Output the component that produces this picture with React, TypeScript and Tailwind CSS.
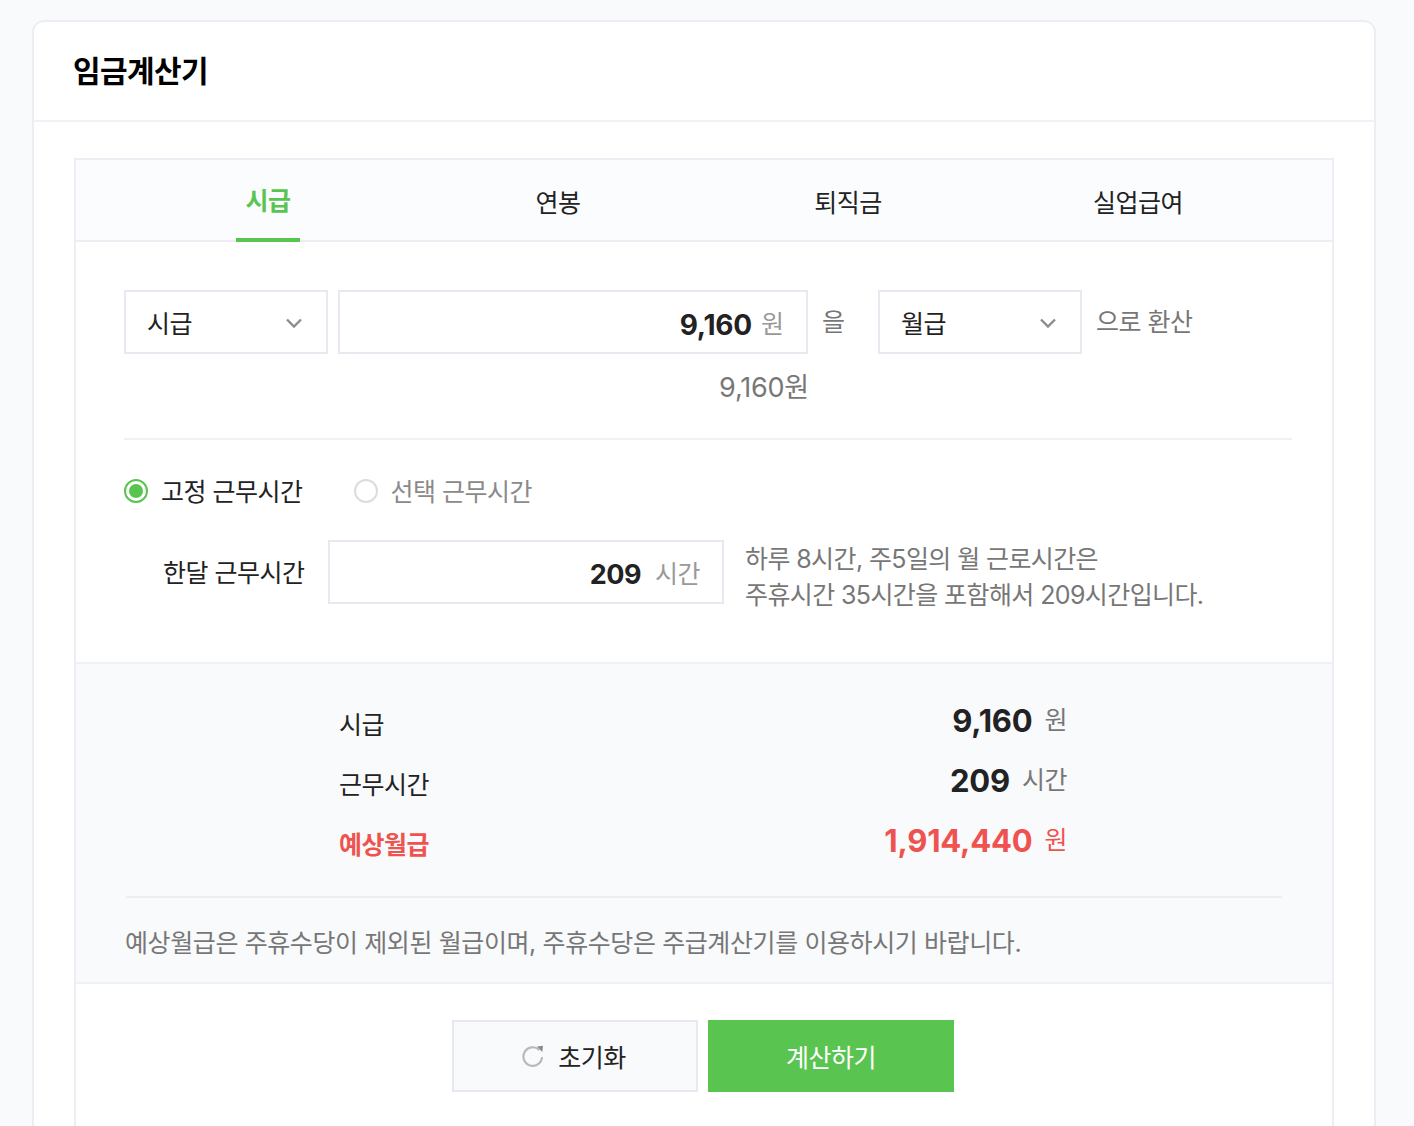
import React from 'react';

const font = "font-['Inter','Noto_Sans_CJK_KR',sans-serif]";

function Chevron() {
  return (
    <svg width="18" height="12" viewBox="0 0 18 12" fill="none" className="mt-[2px] shrink-0">
      <path d="M2 2.5 L9 9.5 L16 2.5" stroke="#8a8d91" strokeWidth="2.4" />
    </svg>
  );
}

function SelectBox({ label, className }: { label: string; className: string }) {
  return (
    <div className={`flex h-16 items-center justify-between border-2 border-[#e6e9f0] pl-[21px] pr-[23px] text-[25px] tracking-[-0.5px] text-[#222] ${className}`}>
      <span className="pt-[6px]">{label}</span>
      <Chevron />
    </div>
  );
}

function Radio({ checked, label }: { checked?: boolean; label: string }) {
  return (
    <div className={`flex items-center gap-[13px] text-[25px] tracking-[-0.5px] ${checked ? 'text-[#222]' : 'text-[#8a8a8a]'}`}>
      <span className={`flex h-6 w-6 items-center justify-center rounded-full border-2 ${checked ? 'border-[#5ac451] bg-white' : 'border-[#dcdcdc] bg-white'}`}>
        {checked && <span className="h-[14px] w-[14px] rounded-full bg-[#5ac451]" />}
      </span>
      <span className="pt-1">{label}</span>
    </div>
  );
}

function ResultRow({ label, value, unit, red }: { label: string; value: string; unit: string; red?: boolean }) {
  return (
    <div className="flex h-[60px] items-center justify-between">
      <span className={`pt-2 text-[25px] tracking-[-0.5px] ${red ? 'font-bold text-[#ee5350]' : 'text-[#222]'}`}>{label}</span>
      <span className="mb-[2px] flex items-center">
        <b className={`text-[31px] font-bold tracking-[-0.2px] ${red ? 'text-[#ee5350]' : 'text-[#222]'}`}>{value}</b>
        <span className={`ml-3 text-[25px] tracking-[-0.5px] ${red ? 'text-[#ee5350]' : 'text-[#777]'}`}>{unit}</span>
      </span>
    </div>
  );
}

export default function App() {
  return (
    <div className={`h-[1126px] overflow-hidden bg-[#f9fafc] pl-8 pr-[38px] pt-5 ${font}`}>
      <div className="h-[1200px] rounded-t-xl border-2 border-[#eceef3] bg-white">
        <div className="flex h-[100px] items-center border-b-2 border-[#f0f1f4] pl-[39px]">
          <h1 className="text-[30px] font-bold tracking-[-0.6px] text-black">임금계산기</h1>
        </div>

        <div className="mx-10 mt-9 border-2 border-[#eceef3] pb-[100px]">
          <div className="flex h-[82px] border-b-2 border-[#eceef3] bg-[#fbfcfe] pl-[47px] pr-[49px]">
            {['시급', '연봉', '퇴직금', '실업급여'].map((tab, i) => (
              <div key={tab} className="flex w-[290px] justify-center">
                <div className={`flex h-[82px] items-center justify-center pt-[6px] text-[25px] tracking-[-0.5px] ${i === 0 ? 'w-16 border-b-4 border-[#5ac451] font-bold text-[#5ac451]' : 'text-[#222]'}`}>
                  {tab}
                </div>
              </div>
            ))}
          </div>

          <div className="pl-12 pr-10 pt-12">
            <div className="flex items-start">
              <SelectBox label="시급" className="w-[204px]" />
              <div className="ml-[10px] flex h-16 w-[470px] items-center justify-end border-2 border-[#e6e9f0] pr-[22px] pt-[6px]">
                <b className="text-[28px] font-bold tracking-[-0.2px] text-[#222]">9,160</b>
                <span className="ml-[9px] text-[25px] text-[#999]">원</span>
              </div>
              <span className="ml-[14px] mt-[14px] text-[25px] text-[#777]">을</span>
              <SelectBox label="월급" className="ml-[33px] w-[204px]" />
              <span className="ml-[14px] mt-[14px] text-[25px] tracking-[-0.5px] text-[#777]">으로 환산</span>
            </div>
            <div className="mt-4 w-[685px] text-right text-[27px] leading-9 tracking-[-0.2px] text-[#777]">9,160원</div>
            <div className="mt-8 h-0.5 bg-[#f0f1f4]" />

            <div className="mt-[33px] flex h-9 items-center gap-[51px]">
              <Radio checked label="고정 근무시간" />
              <Radio label="선택 근무시간" />
            </div>

            <div className="mt-[31px] flex items-start">
              <span className="ml-[39px] mt-[15px] w-[141px] whitespace-nowrap text-[25px] tracking-[-0.5px] text-[#222]">한달 근무시간</span>
              <div className="ml-6 flex h-16 w-[396px] items-center justify-end border-2 border-[#e6e9f0] pr-[22px] pt-[6px]">
                <b className="text-[27px] font-bold tracking-[-0.5px] text-[#222]">209</b>
                <span className="ml-[14px] text-[25px] tracking-[-0.5px] text-[#999]">시간</span>
              </div>
              <p className="ml-[21px] mt-px text-[25px] leading-9 tracking-[-0.6px] text-[#777]">
                하루 8시간, 주5일의 월 근로시간은<br />주휴시간 35시간을 포함해서 209시간입니다.
              </p>
            </div>
          </div>

          <div className="mt-[49px] h-[322px] border-y-2 border-[#f0f1f4] bg-[#f9fafc] pt-[28px]">
            <div className="ml-[263px] w-[728px]">
              <ResultRow label="시급" value="9,160" unit="원" />
              <ResultRow label="근무시간" value="209" unit="시간" />
              <ResultRow label="예상월급" value="1,914,440" unit="원" red />
            </div>
            <div className="ml-[50px] mr-[50px] mt-[24px] h-0.5 bg-[#eceef3]" />
            <p className="ml-[49px] mt-[27px] text-[25px] leading-9 tracking-[-0.4px] text-[#777]">
              예상월급은 주휴수당이 제외된 월급이며, 주휴수당은 주급계산기를 이용하시기 바랍니다.
            </p>
          </div>

          <div className="flex justify-center gap-[10px] pr-[2px] pt-9">
            <button className="flex h-[72px] w-[246px] items-center justify-center gap-[14px] border-2 border-[#e6e9f0] bg-[#f9fafc] pr-[2px] text-[25px] tracking-[-0.5px] text-[#222]">
              <svg width="22" height="22" viewBox="0 0 22 22" fill="none">
                <path d="M17.3 5 A9.3 9.3 0 1 0 20 12" stroke="#b9b9b9" strokeWidth="2.2" fill="none" />
                <path d="M15 1.5 L21 0.8 L20.3 7 Z" fill="#8a8a8a" />
              </svg>
              <span className="pt-[6px]">초기화</span>
            </button>
            <button className="h-[72px] w-[246px] bg-[#5ac451] pt-[6px] text-[25px] tracking-[-0.5px] text-white">
              계산하기
            </button>
          </div>
        </div>
      </div>
    </div>
  );
}
